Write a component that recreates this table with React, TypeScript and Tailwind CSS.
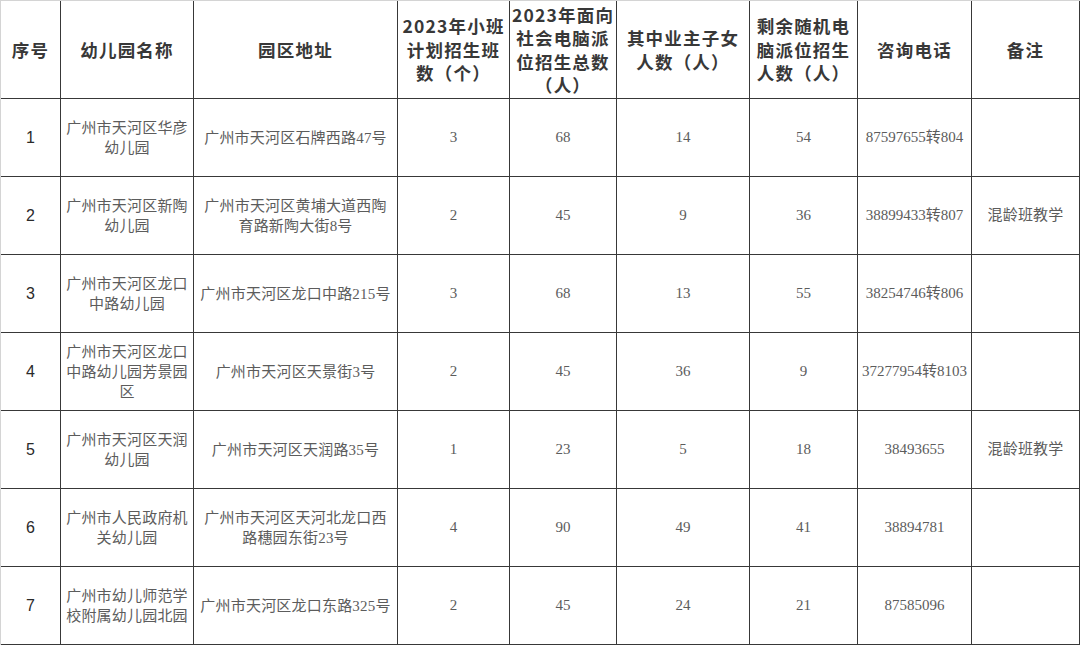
const HEADERS: string[][] = [
  ["序号"],
  ["幼儿园名称"],
  ["园区地址"],
  ["2023年小班", "计划招生班", "数（个）"],
  ["2023年面向", "社会电脑派", "位招生总数", "（人）"],
  ["其中业主子女", "人数（人）"],
  ["剩余随机电", "脑派位招生", "人数（人）"],
  ["咨询电话"],
  ["备注"],
];

type Row = {
  no: string;
  name: string[];
  addr: string[];
  classes: string;
  total: string;
  owners: string;
  random: string;
  phone: string;
  note: string;
};

const ROWS: Row[] = [
  { no: "1", name: ["广州市天河区华彦", "幼儿园"], addr: ["广州市天河区石牌西路47号"], classes: "3", total: "68", owners: "14", random: "54", phone: "87597655转804", note: "" },
  { no: "2", name: ["广州市天河区新陶", "幼儿园"], addr: ["广州市天河区黄埔大道西陶", "育路新陶大街8号"], classes: "2", total: "45", owners: "9", random: "36", phone: "38899433转807", note: "混龄班教学" },
  { no: "3", name: ["广州市天河区龙口", "中路幼儿园"], addr: ["广州市天河区龙口中路215号"], classes: "3", total: "68", owners: "13", random: "55", phone: "38254746转806", note: "" },
  { no: "4", name: ["广州市天河区龙口", "中路幼儿园芳景园", "区"], addr: ["广州市天河区天景街3号"], classes: "2", total: "45", owners: "36", random: "9", phone: "37277954转8103", note: "" },
  { no: "5", name: ["广州市天河区天润", "幼儿园"], addr: ["广州市天河区天润路35号"], classes: "1", total: "23", owners: "5", random: "18", phone: "38493655", note: "混龄班教学" },
  { no: "6", name: ["广州市人民政府机", "关幼儿园"], addr: ["广州市天河区天河北龙口西", "路穗园东街23号"], classes: "4", total: "90", owners: "49", random: "41", phone: "38894781", note: "" },
  { no: "7", name: ["广州市幼儿师范学", "校附属幼儿园北园"], addr: ["广州市天河区龙口东路325号"], classes: "2", total: "45", owners: "24", random: "21", phone: "87585096", note: "" },
];

const serif = "font-['Liberation_Serif','Noto_Sans_CJK_SC',serif]";

function Lines({ lines }: { lines: string[] }) {
  return (
    <>
      {lines.map((l, i) => (
        <span key={i} className="block whitespace-nowrap">
          {l}
        </span>
      ))}
    </>
  );
}

function Cell({ children, className = "" }: { children: React.ReactNode; className?: string }) {
  return (
    <div className={`flex flex-col items-center justify-center text-center border-r border-b border-[#383838] overflow-hidden ${className}`}>
      {children}
    </div>
  );
}

export default function App() {
  return (
    <div className="w-[1080px] h-[646px] bg-white">
      <div className="grid grid-cols-[60px_133px_204px_112px_107px_133px_108px_114px_108px] grid-rows-[98px_repeat(7,78px)] border-l border-t border-[#d4d4d4]">
        {HEADERS.map((h, i) => (
          <Cell key={i} className="font-['Noto_Sans_CJK_SC',sans-serif] font-bold text-[17.5px] leading-[23.5px] tracking-[1.2px] text-[#383838]">
            <Lines lines={h} />
          </Cell>
        ))}
        {ROWS.map((r) => (
          <div key={r.no} className="contents">
            <Cell className="font-['Liberation_Sans',sans-serif] text-[16px] text-[#2a2a2a]">{r.no}</Cell>
            <Cell className={`${serif} text-[15px] leading-[20px] tracking-[0.2px] text-[#5c5c5c]`}>
              <Lines lines={r.name} />
            </Cell>
            <Cell className={`${serif} text-[15px] leading-[20px] tracking-[0.2px] text-[#5c5c5c]`}>
              <Lines lines={r.addr} />
            </Cell>
            <Cell className={`${serif} text-[15px] text-[#5c5c5c]`}>{r.classes}</Cell>
            <Cell className={`${serif} text-[15px] text-[#5c5c5c]`}>{r.total}</Cell>
            <Cell className={`${serif} text-[15px] text-[#5c5c5c]`}>{r.owners}</Cell>
            <Cell className={`${serif} text-[15px] text-[#5c5c5c]`}>{r.random}</Cell>
            <Cell className={`${serif} text-[15px] whitespace-nowrap text-[#5c5c5c]`}>{r.phone}</Cell>
            <Cell className={`${serif} text-[15px] tracking-[0.2px] text-[#5c5c5c]`}>{r.note}</Cell>
          </div>
        ))}
      </div>
    </div>
  );
}
